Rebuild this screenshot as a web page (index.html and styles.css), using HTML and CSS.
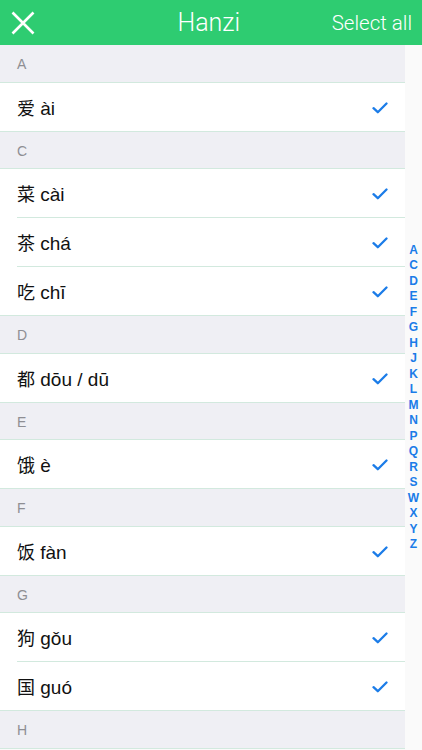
FILE: index.html
```html
<!DOCTYPE html>
<html>
  <head>
    <title>Hanzi</title>
    <link rel="stylesheet" href="styles.css">
  </head>
  <body>

    <div class="topbar">
      <button class="close" aria-label="Close">
        <svg width="24" height="24" viewBox="0 0 24 24">
          <path d="M1.5 1.5 L22.5 22.5 M22.5 1.5 L1.5 22.5" stroke="#fff" stroke-width="2.6" fill="none"/>
        </svg>
      </button>
      <div class="title">Hanzi</div>
      <button class="select-all">Select all</button>
    </div>

    <div class="main">

      <div class="list">

        <div class="section">A</div>
        <div class="row last"><div class="cell"><span class="word"><span class="han">爱</span> ài</span><span class="check"></span></div></div>

        <div class="section">C</div>
        <div class="row"><div class="cell"><span class="word"><span class="han">菜</span> cài</span><span class="check"></span></div></div>
        <div class="row"><div class="cell"><span class="word"><span class="han">茶</span> chá</span><span class="check"></span></div></div>
        <div class="row last"><div class="cell"><span class="word"><span class="han">吃</span> chī</span><span class="check"></span></div></div>

        <div class="section">D</div>
        <div class="row last"><div class="cell"><span class="word"><span class="han">都</span> dōu / dū</span><span class="check"></span></div></div>

        <div class="section">E</div>
        <div class="row last"><div class="cell"><span class="word"><span class="han">饿</span> è</span><span class="check"></span></div></div>

        <div class="section">F</div>
        <div class="row last"><div class="cell"><span class="word"><span class="han">饭</span> fàn</span><span class="check"></span></div></div>

        <div class="section">G</div>
        <div class="row"><div class="cell"><span class="word"><span class="han">狗</span> gǒu</span><span class="check"></span></div></div>
        <div class="row last"><div class="cell"><span class="word"><span class="han">国</span> guó</span><span class="check"></span></div></div>

        <div class="section">H</div>

      </div>

      <div class="index" id="index"></div>

    </div>

    <script>
      // --- section index on the right
      const letters = 'ACDEFGHJKLMNPQRSWXYZ'
      const index = document.getElementById('index')

      for (const l of letters) {
        const a = document.createElement('a')
        a.textContent = l
        index.appendChild(a)
      }

      // --- checkmarks
      const tick = '<svg width="16" height="12" viewBox="0 0 16 12"><path d="M1.5 6.2 L5.8 10.2 L14.5 1.5" stroke="#1b7ce8" stroke-width="2.3" fill="none" stroke-linecap="round" stroke-linejoin="round"/></svg>'
      document.querySelectorAll('.check').forEach(function(el) {
        el.innerHTML = tick
      })
    </script>
  </body>
</html>
```

FILE: styles.css
```css
body, html {
  margin: 0;
  height: 100%;
}

body {
  font-family: "Liberation Sans", "Noto Sans CJK SC", sans-serif;
  background-color: #fafafa;
  overflow: hidden;
}

/* Top bar */

.topbar {
  height: 45px;
  background-color: #2ecc71;
  display: flex;
  align-items: center;
  padding: 0 10px 0 10px;
  box-sizing: border-box;
}

.topbar button {
  background: none;
  border: none;
  padding: 0;
  color: #fff;
}

.close {
  width: 26px;
  height: 26px;
  display: flex;
  align-items: center;
  justify-content: center;
}

.title {
  flex: 1;
  text-align: center;
  color: #fff;
  font-family: Roboto, "Liberation Sans", sans-serif;
  font-weight: 300;
  font-size: 25px;
  padding-left: 50px;
}

.select-all {
  font-size: 20.5px;
  font-family: Roboto, "Liberation Sans", sans-serif;
  font-weight: 300;
}

/* List */

.main {
  display: flex;
  height: 705px;
  overflow: hidden;
}

.list {
  width: 405px;
  flex: none;
}

.section {
  height: 37.5px;
  box-sizing: border-box;
  background-color: #efeff4;
  border-bottom: 1px solid #d2e9de;
  color: #8e8e93;
  font-size: 14px;
  padding: 2px 0 0 17px;
  display: flex;
  align-items: center;
}

.row {
  height: 49px;
  background-color: #fff;
  padding-left: 17px;
}

.cell {
  height: 100%;
  box-sizing: border-box;
  padding-right: 17px;
  border-bottom: 1px solid #d2e9de;
  display: flex;
  align-items: center;
  justify-content: space-between;
  font-size: 19px;
  color: #111;
}

.row.last {
  box-sizing: border-box;
  border-bottom: 1px solid #d2e9de;
}

.row.last .cell {
  border-bottom: none;
}

.han {
  font-family: "Noto Sans CJK SC", sans-serif;
  font-size: 18px;
}

.check {
  display: flex;
  padding-top: 2px;
}

/* Index */

.index {
  flex: 1;
  display: flex;
  flex-direction: column;
  justify-content: center;
  align-items: center;
}

.index a {
  color: #1b7ce8;
  font-size: 12px;
  font-weight: bold;
  line-height: 15.5px;
}
```
